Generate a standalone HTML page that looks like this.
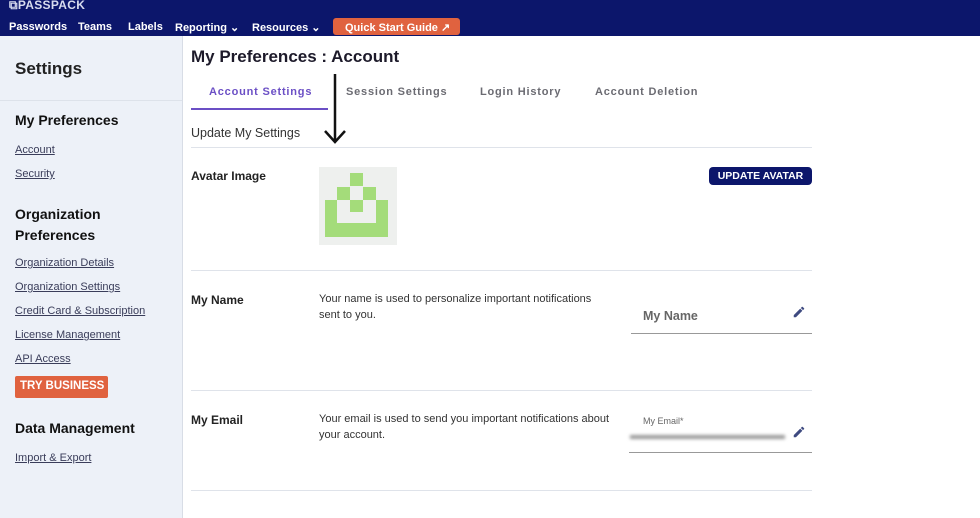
<!DOCTYPE html>
<html><head><meta charset="utf-8"><style>
*{margin:0;padding:0;box-sizing:border-box}
body{width:980px;height:518px;overflow:hidden;font-family:"Liberation Sans",sans-serif;background:#fff;position:relative;color:#1a1a2a}
.nav{position:absolute;left:0;top:0;width:980px;height:36px;background:#0c166b}
.logo{position:absolute;left:9px;top:-2px;color:#d8dcef;font-weight:bold;font-size:12px;letter-spacing:0.3px}
.menu{position:absolute;top:21px;color:#fff;font-weight:bold;font-size:11px;white-space:nowrap}
.qs{position:absolute;left:333px;top:18px;width:127px;height:17px;background:#e0623f;border-radius:3px;color:#fff;font-weight:bold;font-size:11px;padding:3px 0 0 12px;white-space:nowrap}
.side{position:absolute;left:0;top:36px;width:183px;height:482px;background:#edf1f8;border-right:1px solid #d8dde6}
.a{position:absolute;left:15px;font-size:11px;color:#3a3d5a;text-decoration:underline}
.h{position:absolute;left:15px;font-size:14px;font-weight:bold;color:#111}
.t{position:absolute;font-size:11px;letter-spacing:0.8px;font-weight:bold;color:#6b6b72}
.line{position:absolute;left:191px;width:621px;height:1px;background:#dfe3ea}
.lbl{position:absolute;left:191px;font-size:12px;font-weight:bold;color:#222}
.desc{position:absolute;left:319px;font-size:11px;color:#333;line-height:16px;width:290px}
.g{position:absolute;background:#a4dc7a}
.pen{position:absolute;width:14px;height:14px}
</style></head><body>
<div class="nav">
<div class="logo">⧉PASSPACK</div>
<div class="menu" style="left:9px">Passwords</div>
<div class="menu" style="left:78px">Teams</div>
<div class="menu" style="left:128px">Labels</div>
<div class="menu" style="left:175px">Reporting ⌄</div>
<div class="menu" style="left:252px">Resources ⌄</div>
<div class="qs">Quick Start Guide ↗</div>
</div>
<div class="side">
<div class="h" style="top:23px;font-size:17px;color:#222;">Settings</div>
<div style="position:absolute;left:0;top:64px;width:182px;height:1px;background:#dde2ea"></div>
<div class="h" style="top:76px">My Preferences</div>
<div class="a" style="top:108px">Account</div>
<div class="a" style="top:132px">Security</div>
<div class="h" style="top:168px;line-height:21px">Organization<br>Preferences</div>
<div class="a" style="top:221px">Organization Details</div>
<div class="a" style="top:245px">Organization Settings</div>
<div class="a" style="top:269px">Credit Card &amp; Subscription</div>
<div class="a" style="top:293px">License Management</div>
<div class="a" style="top:317px">API Access</div>
<div style="position:absolute;left:15px;top:340px;width:93px;height:22px;background:#e0623f;border-radius:2px;color:#fff;font-weight:bold;font-size:11.5px;padding:4px 0 0 5px;white-space:nowrap">TRY BUSINESS</div>
<div class="h" style="top:384px">Data Management</div>
<div class="a" style="top:416px">Import &amp; Export</div>
</div>
<div style="position:absolute;left:191px;top:47px;font-size:17px;font-weight:bold;color:#1d1a2a">My Preferences : Account</div>
<div class="t" style="left:209px;top:86px;color:#6b4fc5">Account Settings</div>
<div style="position:absolute;left:191px;top:108px;width:137px;height:2px;background:#6b4fc5"></div>
<div class="t" style="left:346px;top:86px">Session Settings</div>
<div class="t" style="left:480px;top:86px">Login History</div>
<div class="t" style="left:595px;top:86px">Account Deletion</div>
<div style="position:absolute;left:191px;top:126px;font-size:12.5px;color:#333">Update My Settings</div>
<svg style="position:absolute;left:320px;top:72px" width="30" height="74"><path d="M15 2V70M5 59L15 70L25 59" stroke="#111" stroke-width="2.5" fill="none"/></svg>
<div class="line" style="top:147px"></div>
<div class="lbl" style="top:169px">Avatar Image</div>
<div style="position:absolute;left:319px;top:167px;width:78px;height:78px;background:#eef0ee"></div>
<div class="g" style="left:350px;top:173px;width:13px;height:13px"></div>
<div class="g" style="left:337px;top:187px;width:13px;height:13px"></div>
<div class="g" style="left:363px;top:187px;width:13px;height:13px"></div>
<div class="g" style="left:350px;top:200px;width:13px;height:12px"></div>
<div class="g" style="left:325px;top:200px;width:12px;height:37px"></div>
<div class="g" style="left:376px;top:200px;width:12px;height:37px"></div>
<div class="g" style="left:325px;top:223px;width:63px;height:14px"></div>
<div style="position:absolute;left:709px;top:167px;width:103px;height:18px;background:#0c166b;border-radius:4px;color:#fff;font-size:10.5px;font-weight:bold;text-align:center;padding-top:3px">UPDATE AVATAR</div>
<div class="line" style="top:270px"></div>
<div class="lbl" style="top:293px">My Name</div>
<div class="desc" style="top:291px">Your name is used to personalize important notifications sent to you.</div>
<div style="position:absolute;left:643px;top:309px;font-size:12.5px;color:#666;font-weight:bold">My Name</div>
<svg class="pen" style="left:792px;top:305px" viewBox="0 0 24 24"><path d="M3 17.25V21h3.75L17.8 9.94l-3.75-3.75L3 17.25zM20.7 7.04a1 1 0 000-1.41l-2.34-2.34a1 1 0 00-1.41 0l-1.83 1.83 3.75 3.75 1.83-1.83z" fill="#3e4a80"/></svg>
<div style="position:absolute;left:631px;top:333px;width:181px;height:1px;background:#999"></div>
<div class="line" style="top:390px"></div>
<div class="lbl" style="top:413px">My Email</div>
<div class="desc" style="top:411px;width:295px">Your email is used to send you important notifications about your account.</div>
<div style="position:absolute;left:643px;top:416px;font-size:9px;color:#666">My Email*</div>
<div style="position:absolute;left:630px;top:435px;width:155px;height:4px;background:#999;filter:blur(1.5px)"></div>
<svg class="pen" style="left:792px;top:425px" viewBox="0 0 24 24"><path d="M3 17.25V21h3.75L17.8 9.94l-3.75-3.75L3 17.25zM20.7 7.04a1 1 0 000-1.41l-2.34-2.34a1 1 0 00-1.41 0l-1.83 1.83 3.75 3.75 1.83-1.83z" fill="#3e4a80"/></svg>
<div style="position:absolute;left:629px;top:452px;width:183px;height:1px;background:#999"></div>
<div class="line" style="top:490px"></div>
</body></html>
